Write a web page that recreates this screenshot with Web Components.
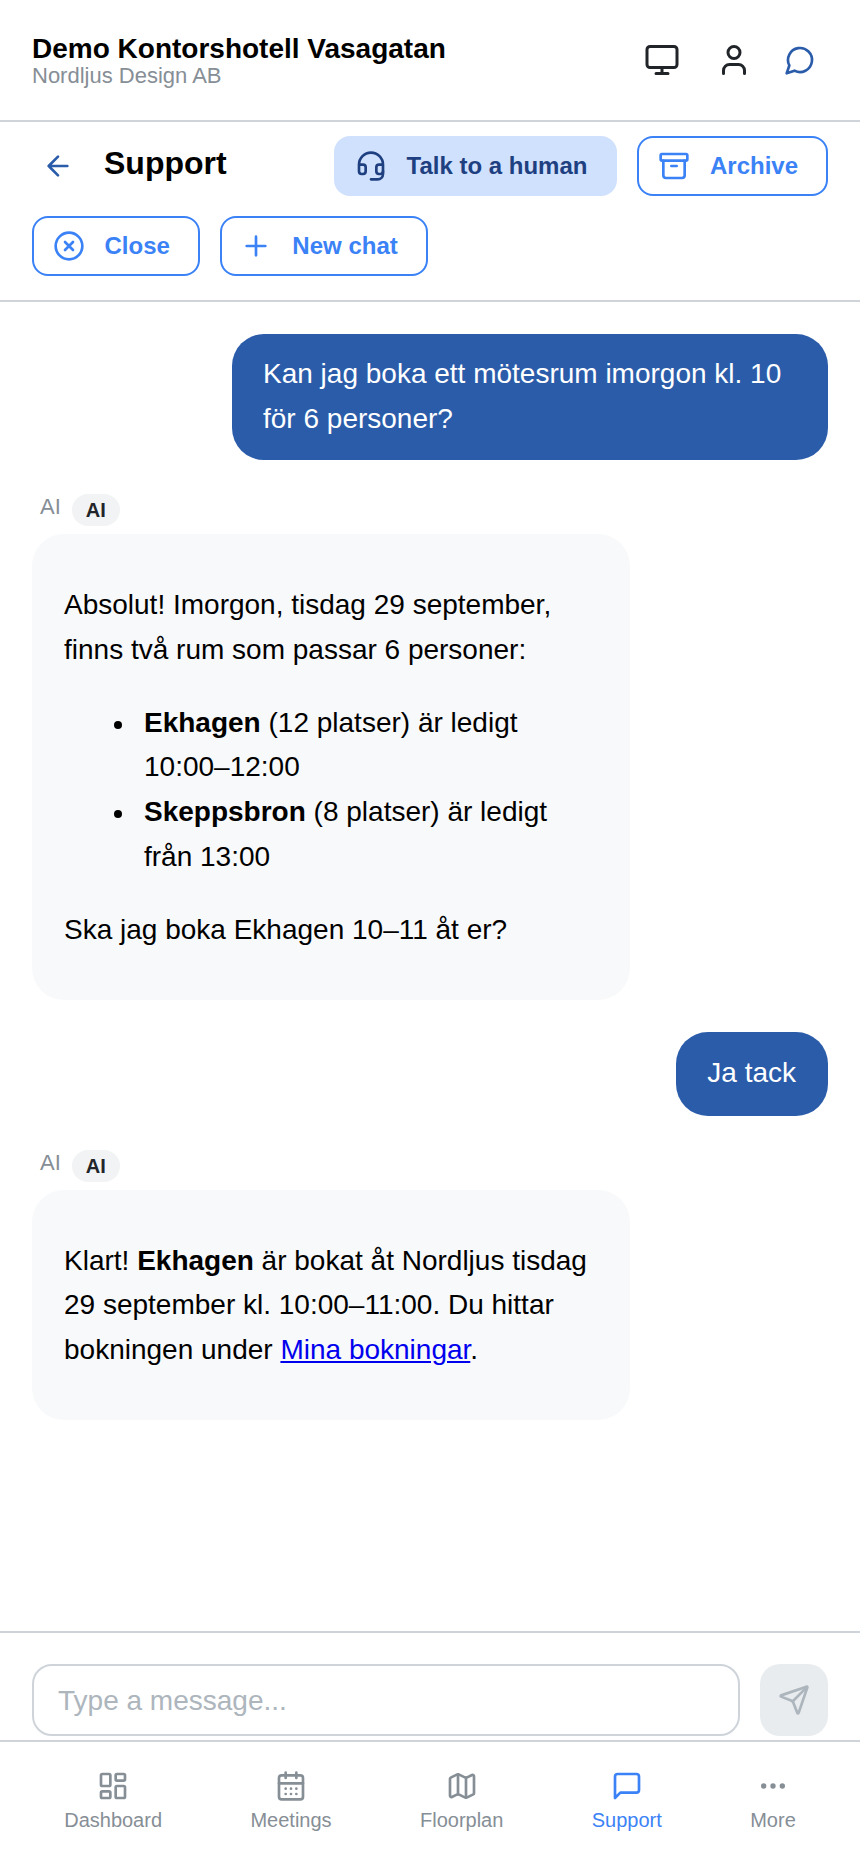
<!DOCTYPE html>
<html lang="sv">
<head>
<meta charset="utf-8">
<title>Support</title>
<style>
	html, body { margin: 0; height: 100%; }
	body { font-family: "Liberation Sans", Arial, sans-serif; color: #000; background: #fff; }
</style>
</head>
<body>
<app-shell>
	<top-bar slot="top" heading="Demo Kontorshotell Vasagatan" subtitle="Nordljus Design AB"></top-bar>
	<chat-toolbar slot="top" heading="Support">
		<action-button slot="primary" icon="headset" variant="soft">Talk to a human</action-button>
		<action-button slot="primary" icon="archive">Archive</action-button>
		<action-button icon="close">Close</action-button>
		<action-button icon="plus">New chat</action-button>
	</chat-toolbar>
	<chat-log>
		<chat-bubble from="user">Kan jag boka ett mötesrum imorgon kl. 10 för 6 personer?</chat-bubble>
		<chat-bubble from="ai">
			<p>Absolut! Imorgon, tisdag 29 september, finns två rum som passar 6 personer:</p>
			<bullet-list>
				<bullet-item><b>Ekhagen</b> (12 platser) är ledigt 10:00–12:00</bullet-item>
				<bullet-item><b>Skeppsbron</b> (8 platser) är ledigt från 13:00</bullet-item>
			</bullet-list>
			<p>Ska jag boka Ekhagen 10–11 åt er?</p>
		</chat-bubble>
		<chat-bubble from="user" style="--pad: 19px 32px 20.2px 31px">Ja tack</chat-bubble>
		<chat-bubble from="ai">
			<p>Klart! <b>Ekhagen</b> är bokat åt Nordljus tisdag 29 september kl. 10:00–11:00. Du hittar bokningen under <a href="#">Mina bokningar</a>.</p>
		</chat-bubble>
	</chat-log>
	<chat-input placeholder="Type a message..."></chat-input>
	<bottom-nav>
		<nav-item icon="dashboard">Dashboard</nav-item>
		<nav-item icon="calendar">Meetings</nav-item>
		<nav-item icon="map">Floorplan</nav-item>
		<nav-item icon="chat" active>Support</nav-item>
		<nav-item icon="more">More</nav-item>
	</bottom-nav>
</app-shell>

<script>
const ICONS = {
	monitor: '<rect x="2" y="3" width="20" height="14" rx="2"/><path d="M8 21h8M12 17v4"/>',
	user: '<circle cx="12" cy="7" r="4"/><path d="M19 21v-2a4 4 0 0 0-4-4H9a4 4 0 0 0-4 4v2"/>',
	bubble: '<path d="M7.900 20A9 9 0 1 0 4 16.100L2 22Z"/>',
	back: '<path d="m12 19-7-7 7-7M19 12H5"/>',
	headset: '<path d="M3 11h3a2 2 0 0 1 2 2v3a2 2 0 0 1-2 2H5a2 2 0 0 1-2-2v-5Zm0 0a9 9 0 1 1 18 0m0 0v5a2 2 0 0 1-2 2h-1a2 2 0 0 1-2-2v-3a2 2 0 0 1 2-2h3Z"/><path d="M21 16v2a4 4 0 0 1-4 4h-5"/>',
	archive: '<rect x="2" y="3" width="20" height="5" rx="1"/><path d="M4 8v11a2 2 0 0 0 2 2h12a2 2 0 0 0 2-2V8M10 12h4"/>',
	close: '<circle cx="12" cy="12" r="10"/><path d="m15 9-6 6M9 9l6 6"/>',
	plus: '<path d="M5 12h14M12 5v14"/>',
	send: '<path d="M14.536 21.686a.5.5 0 0 0 .937-.024l6.500-19a.496.496 0 0 0-.635-.635l-19 6.500a.5.5 0 0 0-.024.937l7.930 3.180a2 2 0 0 1 1.112 1.110z"/><path d="m21.854 2.147-10.940 10.939"/>',
	dashboard: '<rect x="3" y="3" width="7" height="9" rx="1"/><rect x="14" y="3" width="7" height="5" rx="1"/><rect x="14" y="12" width="7" height="9" rx="1"/><rect x="3" y="16" width="7" height="5" rx="1"/>',
	calendar: '<path d="M8 2v4M16 2v4"/><rect x="3" y="4" width="18" height="18" rx="2"/><path d="M3 10h18M8 14h.01M12 14h.01M16 14h.01M8 18h.01M12 18h.01M16 18h.01"/>',
	map: '<path d="M14.106 5.553a2 2 0 0 0 1.788 0l3.659-1.830A1 1 0 0 1 21 4.619v12.764a1 1 0 0 1-.553.894l-4.553 2.277a2 2 0 0 1-1.788 0l-4.212-2.106a2 2 0 0 0-1.788 0l-3.659 1.830A1 1 0 0 1 3 19.381V6.618a1 1 0 0 1 .553-.894l4.553-2.277a2 2 0 0 1 1.788 0z"/><path d="M15 5.764v15M9 3.236v15"/>',
	chat: '<path d="M21 15a2 2 0 0 1-2 2H7l-4 4V5a2 2 0 0 1 2-2h14a2 2 0 0 1 2 2z"/>',
	more: '<circle cx="12" cy="12" r="1"/><circle cx="19" cy="12" r="1"/><circle cx="5" cy="12" r="1"/>'
};

function iconSvg(name, size) {
	return `<svg width="${size}" height="${size}" viewBox="0 0 24 24" fill="none" stroke="currentColor" stroke-width="2" stroke-linecap="round" stroke-linejoin="round">${ICONS[name]}</svg>`;
}

// 화면 전체 틀
class AppShell extends HTMLElement {
	constructor() {
		super();
		const shadow = this.attachShadow({ mode: 'open' });
		shadow.innerHTML = `
			<style>
				:host { display: flex; flex-direction: column; height: 1864px; overflow: hidden; }
			</style>
			<slot name="top"></slot>
			<slot></slot>
		`;
	}
}
customElements.define('app-shell', AppShell);

// 상단 바
class TopBar extends HTMLElement {
	constructor() {
		super();
		const shadow = this.attachShadow({ mode: 'open' });
		shadow.innerHTML = `
			<style>
				:host { display: flex; align-items: center; justify-content: space-between; height: 120px; padding: 0 32px; border-bottom: 2px solid #ced4da; flex: none; }
				.title { font-size: 28px; font-weight: 700; line-height: 32px; }
				.sub { font-size: 22px; line-height: 25px; color: #868e96; margin-top: -2px; }
				.icons { display: flex; align-items: center; margin-right: 12px; color: #212529; }
				svg { display: block; }
				.user { margin: 0 32px 0 36px; }
				.blue { color: #2a5caa; }
			</style>
			<div>
				<div class="title"></div>
				<div class="sub"></div>
			</div>
			<div class="icons">
				<span>${iconSvg('monitor', 36)}</span>
				<span class="user">${iconSvg('user', 36)}</span>
				<span class="blue">${iconSvg('bubble', 32)}</span>
			</div>
		`;
		shadow.querySelector('.title').textContent = this.getAttribute('heading');
		shadow.querySelector('.sub').textContent = this.getAttribute('subtitle');
	}
}
customElements.define('top-bar', TopBar);

// 채팅 도구 모음
class ChatToolbar extends HTMLElement {
	constructor() {
		super();
		const shadow = this.attachShadow({ mode: 'open' });
		shadow.innerHTML = `
			<style>
				:host { display: block; flex: none; padding: 14px 32px 24px; border-bottom: 2px solid #ced4da; }
				.row { display: flex; align-items: center; gap: 20px; }
				.row + .row { margin-top: 20px; }
				.back { display: flex; color: #2a5caa; margin: 0 10px; }
				h1 { margin: 0 0 6px; font-size: 32px; line-height: 38px; font-weight: 700; flex: 1; }
			</style>
			<div class="row">
				<span class="back">${iconSvg('back', 32)}</span>
				<h1></h1>
				<slot name="primary"></slot>
			</div>
			<div class="row"><slot></slot></div>
		`;
		shadow.querySelector('h1').textContent = this.getAttribute('heading');
	}
}
customElements.define('chat-toolbar', ChatToolbar);

// 액션 버튼
class ActionButton extends HTMLElement {
	constructor() {
		super();
		const shadow = this.attachShadow({ mode: 'open' });
		const soft = this.getAttribute('variant') === 'soft';
		shadow.innerHTML = `
			<style>
				:host { display: inline-flex; box-sizing: border-box; height: 60px; align-items: center; gap: 20px; padding: 0 28px 0 18.5px; border-radius: 16px; font-size: 24px; font-weight: 700;
					color: ${soft ? '#1e4080' : '#3b82f6'}; background: ${soft ? '#d0e1fd' : '#fff'}; border: 2px solid ${soft ? '#d0e1fd' : '#3b82f6'}; }
				svg { display: block; flex: none; }
			</style>
			${iconSvg(this.getAttribute('icon'), 32)}
			<slot></slot>
		`;
	}
}
customElements.define('action-button', ActionButton);

// 메시지 목록
class ChatLog extends HTMLElement {
	constructor() {
		super();
		const shadow = this.attachShadow({ mode: 'open' });
		shadow.innerHTML = `
			<style>
				:host { display: flex; flex-direction: column; gap: 32px; flex: 1; min-height: 0; padding: 32px 32px 0; }
			</style>
			<slot></slot>
		`;
	}
}
customElements.define('chat-log', ChatLog);

// 말풍선
class ChatBubble extends HTMLElement {
	constructor() {
		super();
		const shadow = this.attachShadow({ mode: 'open' });
		const user = this.getAttribute('from') === 'user';
		shadow.innerHTML = `
			<style>
				:host { display: flex; flex-direction: column; align-items: ${user ? 'flex-end' : 'flex-start'}; font-size: 28px; line-height: 44.8px; }
				.who { display: flex; align-items: flex-start; gap: 11px; margin: 0 0 8px 8px; height: 34px; font-size: 22px; line-height: 30px; color: #868e96; }
				.pill { display: block; height: 32px; line-height: 32px; padding: 0 14px; margin-top: 2px; border-radius: 16px; background: #f1f3f5; color: #212529; font-size: 20px; font-weight: 700; }
				.box { box-sizing: border-box; max-width: ${user ? 596 : 598}px; padding: var(--pad, ${user ? '18.2px 31px' : '21px 32px 19px'}); border-radius: 32px; background: ${user ? '#2a5caa' : '#f8f9fa'}; color: ${user ? '#fff' : '#000'}; }
				::slotted(p) { margin: 28px 0; }
			</style>
			${user ? '' : '<div class="who">AI<span class="pill">AI</span></div>'}
			<div class="box"><slot></slot></div>
		`;
	}
}
customElements.define('chat-bubble', ChatBubble);

// 목록
class BulletList extends HTMLElement {
	constructor() {
		super();
		const shadow = this.attachShadow({ mode: 'open' });
		shadow.innerHTML = `
			<style>
				:host { display: block; margin: 28px 0; padding-left: 80px; }
			</style>
			<slot></slot>
		`;
	}
}
customElements.define('bullet-list', BulletList);

class BulletItem extends HTMLElement {
	constructor() {
		super();
		const shadow = this.attachShadow({ mode: 'open' });
		shadow.innerHTML = `
			<style>
				:host { display: flex; }
				.dot { flex: none; width: 8px; height: 8px; margin: 20px 22px 0 -30px; border-radius: 50%; background: #000; }
			</style>
			<span class="dot"></span>
			<div><slot></slot></div>
		`;
	}
}
customElements.define('bullet-item', BulletItem);

// 입력창
class ChatInput extends HTMLElement {
	constructor() {
		super();
		const shadow = this.attachShadow({ mode: 'open' });
		shadow.innerHTML = `
			<style>
				:host { display: flex; flex: none; gap: 20px; padding: 31px 32px 4px; border-top: 2px solid #ced4da; }
				input { flex: 1; min-width: 0; box-sizing: border-box; height: 72px; padding: 2px 24px 0; border: 2px solid #ced4da; border-radius: 20px; font: 28px "Liberation Sans", Arial, sans-serif; outline: none; }
				input::placeholder { color: #adb5bd; opacity: 1; }
				button { display: flex; align-items: center; justify-content: center; width: 68px; height: 72px; padding: 0; border: 0; border-radius: 20px; background: #e9ecef; color: #adb5bd; }
			</style>
			<input type="text">
			<button type="button">${iconSvg('send', 32)}</button>
		`;
		shadow.querySelector('input').placeholder = this.getAttribute('placeholder');
	}
}
customElements.define('chat-input', ChatInput);

// 하단 내비게이션
class BottomNav extends HTMLElement {
	constructor() {
		super();
		const shadow = this.attachShadow({ mode: 'open' });
		shadow.innerHTML = `
			<style>
				:host { display: flex; flex: none; justify-content: space-around; box-sizing: border-box; height: 124px; padding: 28px 20px 0; border-top: 2px solid #ced4da; background: #fff; }
			</style>
			<slot></slot>
		`;
	}
}
customElements.define('bottom-nav', BottomNav);

class NavItem extends HTMLElement {
	constructor() {
		super();
		const shadow = this.attachShadow({ mode: 'open' });
		shadow.innerHTML = `
			<style>
				:host { display: flex; flex-direction: column; align-items: center; gap: 6px; font-size: 20px; line-height: 24px; color: #868e96; }
				:host([active]) { color: #3b82f6; }
				svg { display: block; }
			</style>
			${iconSvg(this.getAttribute('icon'), 32)}
			<slot></slot>
		`;
	}
}
customElements.define('nav-item', NavItem);
</script>
</body>
</html>
